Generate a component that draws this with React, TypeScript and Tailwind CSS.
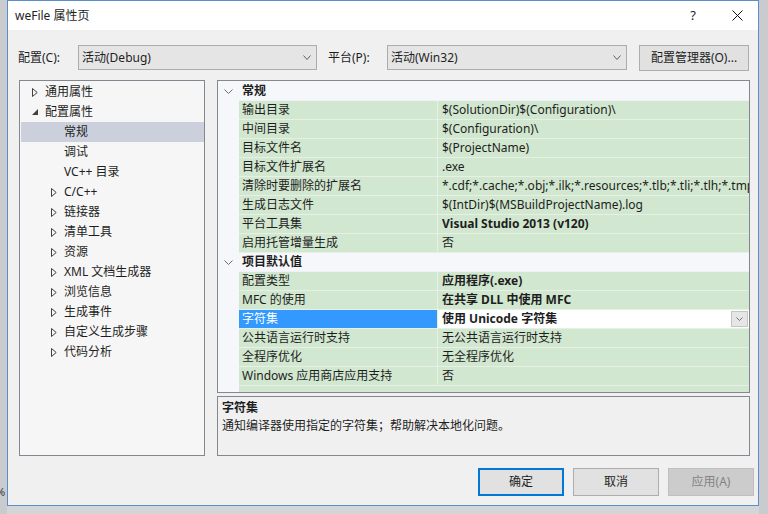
import React from "react";

const Chevron = ({ w = 8, h = 5, color = "#606060" }: { w?: number; h?: number; color?: string }) => (
  <svg width={w} height={h} viewBox={`0 0 ${w} ${h}`}>
    <polyline points={`0.5,0.5 ${w / 2},${h - 0.5} ${w - 0.5},0.5`} fill="none" stroke={color} strokeWidth="1" />
  </svg>
);

const Collapsed = () => (
  <svg width="6" height="9" viewBox="0 0 6 9">
    <polygon points="0.5,0.5 5.2,4.5 0.5,8.5" fill="none" stroke="#404040" strokeWidth="1" />
  </svg>
);

const Expanded = () => (
  <svg width="6" height="6" viewBox="0 0 6 6">
    <polygon points="6,0 6,6 0,6" fill="#404040" />
  </svg>
);

type TreeItem = { label: string; level: 0 | 1; state: "collapsed" | "expanded" | "none"; selected?: boolean };

const tree: TreeItem[] = [
  { label: "通用属性", level: 0, state: "collapsed" },
  { label: "配置属性", level: 0, state: "expanded" },
  { label: "常规", level: 1, state: "none", selected: true },
  { label: "调试", level: 1, state: "none" },
  { label: "VC++ 目录", level: 1, state: "none" },
  { label: "C/C++", level: 1, state: "collapsed" },
  { label: "链接器", level: 1, state: "collapsed" },
  { label: "清单工具", level: 1, state: "collapsed" },
  { label: "资源", level: 1, state: "collapsed" },
  { label: "XML 文档生成器", level: 1, state: "collapsed" },
  { label: "浏览信息", level: 1, state: "collapsed" },
  { label: "生成事件", level: 1, state: "collapsed" },
  { label: "自定义生成步骤", level: 1, state: "collapsed" },
  { label: "代码分析", level: 1, state: "collapsed" },
];

type Row =
  | { kind: "header"; label: string }
  | { kind: "prop"; name: string; value: string; bold?: boolean; selected?: boolean };

const rows: Row[] = [
  { kind: "header", label: "常规" },
  { kind: "prop", name: "输出目录", value: "$(SolutionDir)$(Configuration)\\" },
  { kind: "prop", name: "中间目录", value: "$(Configuration)\\" },
  { kind: "prop", name: "目标文件名", value: "$(ProjectName)" },
  { kind: "prop", name: "目标文件扩展名", value: ".exe" },
  { kind: "prop", name: "清除时要删除的扩展名", value: "*.cdf;*.cache;*.obj;*.ilk;*.resources;*.tlb;*.tli;*.tlh;*.tmp;*.rsp;*.pgc;*.pgd;*.meta" },
  { kind: "prop", name: "生成日志文件", value: "$(IntDir)$(MSBuildProjectName).log" },
  { kind: "prop", name: "平台工具集", value: "Visual Studio 2013 (v120)", bold: true },
  { kind: "prop", name: "启用托管增量生成", value: "否" },
  { kind: "header", label: "项目默认值" },
  { kind: "prop", name: "配置类型", value: "应用程序(.exe)", bold: true },
  { kind: "prop", name: "MFC 的使用", value: "在共享 DLL 中使用 MFC", bold: true },
  { kind: "prop", name: "字符集", value: "使用 Unicode 字符集", bold: true, selected: true },
  { kind: "prop", name: "公共语言运行时支持", value: "无公共语言运行时支持" },
  { kind: "prop", name: "全程序优化", value: "无全程序优化" },
  { kind: "prop", name: "Windows 应用商店应用支持", value: "否" },
];

export default function App() {
  return (
    <div className="w-[768px] h-[514px] bg-[#d3d5d8] flex overflow-hidden text-[12px] text-[#1e1e1e] font-['Noto_Sans','Noto_Sans_CJK_SC',sans-serif]">
      <div className="w-[7px] h-full relative bg-[#c9cbce] overflow-hidden">
        <span className="absolute left-[-4px] top-[486px] text-[11px] text-[#333] leading-none">%</span>
      </div>
      <div className="w-[752px] h-[506px] border border-[#5b8fc9] bg-[#f0f0f0] flex flex-col">
        {/* Title bar */}
        <div className="h-[29px] bg-white flex items-center pl-[7px] shrink-0">
          <span className="leading-none">weFile 属性页</span>
          <div className="flex-1" />
          <span className="w-[20px] text-center text-[13px] leading-none">?</span>
          <div className="w-[20px] ml-[24px] mr-[11px] flex items-center justify-center">
            <svg width="11" height="11" viewBox="0 0 11 11">
              <line x1="0.5" y1="0.5" x2="10.5" y2="10.5" stroke="#111" strokeWidth="1" />
              <line x1="10.5" y1="0.5" x2="0.5" y2="10.5" stroke="#111" strokeWidth="1" />
            </svg>
          </div>
        </div>

        {/* Config row */}
        <div className="flex items-center h-[25px] mt-[15px] shrink-0">
          <span className="ml-[10px] w-[60px]">配置(C):</span>
          <div className="w-[239px] h-[25px] bg-[#e5e5e5] border border-[#acacac] flex items-center pl-[3px] pr-[5px]">
            <span className="flex-1">活动(Debug)</span>
            <Chevron />
          </div>
          <span className="ml-[11px] w-[59px]">平台(P):</span>
          <div className="w-[240px] h-[25px] bg-[#e5e5e5] border border-[#acacac] flex items-center pl-[3px] pr-[5px]">
            <span className="flex-1">活动(Win32)</span>
            <Chevron />
          </div>
          <div className="ml-[12px] w-[110px] h-[26px] bg-[#e1e1e1] border border-[#adadad] flex items-center justify-center">
            配置管理器(O)...
          </div>
        </div>

        {/* Main */}
        <div className="flex mt-[10px] h-[376px] shrink-0">
          {/* Tree */}
          <div className="ml-[11px] w-[186px] h-full border border-[#828790] bg-[#f6f6f6] pt-[1px]">
            {tree.map((t, i) => (
              <div
                key={i}
                className={`h-[20px] flex items-center ml-[1px] ${t.selected ? "bg-[#ccd0dc]" : ""}`}
              >
                <div className={`${t.level === 0 ? "w-[24px]" : "w-[43px]"} flex items-center justify-end pr-[7px] shrink-0`}>
                  {t.state === "collapsed" && <Collapsed />}
                  {t.state === "expanded" && <Expanded />}
                </div>
                <span className="whitespace-nowrap">{t.label}</span>
              </div>
            ))}
          </div>

          {/* Right side */}
          <div className="ml-[12px] w-[533px] h-full flex flex-col">
            <div className="h-[313px] border border-[#828790] flex flex-col bg-[#f5f7fa] pt-[1px] overflow-hidden">
              {rows.map((r, i) =>
                r.kind === "header" ? (
                  <div key={i} className="h-[19px] flex shrink-0">
                    <div className="w-[21px] flex items-center justify-center">
                      <Chevron w={9} h={5} color="#6d6d6d" />
                    </div>
                    <div className="flex-1 flex items-center pl-[3px] font-bold border-b border-[#eef1f5]">
                      {r.label}
                    </div>
                  </div>
                ) : (
                  <div key={i} className="h-[19px] flex shrink-0">
                    <div className="w-[21px]" />
                    <div
                      className={`w-[199px] flex items-center pl-[3px] whitespace-nowrap border-b border-r border-[#e6f0e4] ${
                        r.selected ? "bg-[#3399ff] text-white" : "bg-[#d1e7cf]"
                      }`}
                    >
                      {r.name}
                    </div>
                    <div
                      className={`flex-1 min-w-0 flex items-center pl-[4px] whitespace-nowrap overflow-hidden border-b border-[#e6f0e4] ${
                        r.selected ? "bg-white" : "bg-[#d1e7cf]"
                      } ${r.bold ? "font-bold" : ""}`}
                    >
                      <span className="flex-1 overflow-hidden">{r.value}</span>
                      {r.selected && (
                        <div className="w-[17px] h-[16px] mr-[1px] bg-[#e6e6e6] border border-[#c4c4c4] flex items-center justify-center shrink-0">
                          <Chevron w={7} h={4} color="#707070" />
                        </div>
                      )}
                    </div>
                  </div>
                )
              )}
              <div className="flex-1 flex">
                <div className="w-[21px]" />
                <div className="flex-1 bg-[#d1e7cf]" />
              </div>
            </div>
            <div className="mt-[3px] h-[60px] border border-[#828790] bg-[#f0f0f0] pl-[4px] pt-[2px] leading-[18px]">
              <div className="font-bold">字符集</div>
              <div>通知编译器使用指定的字符集；帮助解决本地化问题。</div>
            </div>
          </div>
        </div>

        {/* Buttons */}
        <div className="flex justify-end mt-[12px] pr-[4px] gap-[9px]">
          <div className="w-[86px] h-[28px] bg-[#e1e1e1] border-2 border-[#0078d7] flex items-center justify-center">确定</div>
          <div className="w-[86px] h-[28px] bg-[#e1e1e1] border border-[#adadad] flex items-center justify-center">取消</div>
          <div className="w-[86px] h-[28px] bg-[#cccccc] border border-[#bfbfbf] text-[#838383] flex items-center justify-center">应用(A)</div>
        </div>
      </div>
      <div className="flex-1 bg-[#c9cbce]" />
    </div>
  );
}
